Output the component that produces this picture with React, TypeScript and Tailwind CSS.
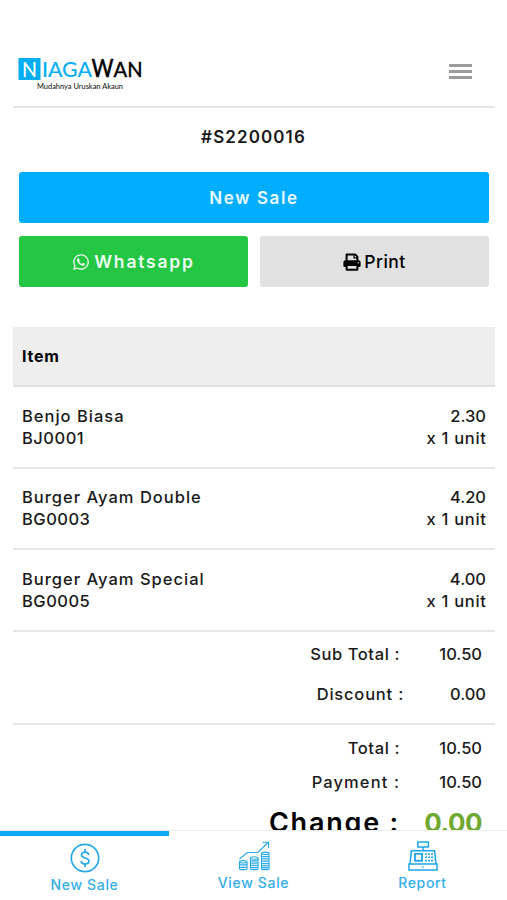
import React from 'react';
import { FaWhatsapp } from 'react-icons/fa';

const items = [
  { name: 'Benjo Biasa', code: 'BJ0001', price: '2.30', qty: 'x 1 unit' },
  { name: 'Burger Ayam Double', code: 'BG0003', price: '4.20', qty: 'x 1 unit' },
  { name: 'Burger Ayam Special', code: 'BG0005', price: '4.00', qty: 'x 1 unit' },
];

const Logo: React.FC = () => (
  <svg width="126" height="36" viewBox="0 0 126 36" role="img" aria-label="Niagawan">
    <rect x="0.5" y="2" width="22" height="22" fill="#00aeef" />
    <g fontFamily="Lato, sans-serif">
      <text x="4" y="20.5" fontSize="22" fill="#fff" textLength="15" lengthAdjust="spacingAndGlyphs">N</text>
      <text x="24" y="21" fontSize="22" fill="#00aeef" textLength="50" lengthAdjust="spacingAndGlyphs">IAGA</text>
      <text x="73.500" y="21" fontSize="25" fill="#000" stroke="#000" strokeWidth="0.4" textLength="22" lengthAdjust="spacingAndGlyphs">W</text>
      <text x="95.500" y="21" fontSize="22" fill="#000" stroke="#000" strokeWidth="0.3" textLength="29" lengthAdjust="spacingAndGlyphs">AN</text>
      <text x="19" y="33" fontSize="7.5" fill="#222" textLength="86" lengthAdjust="spacingAndGlyphs">Mudahnya Uruskan Akaun</text>
    </g>
  </svg>
);

const PrintIcon: React.FC = () => (
  <svg width="18" height="18" viewBox="0 0 18 18" className="mr-[3px]">
    <path d="M3.6 8V1.4h8.6l2.2 2.2V8" fill="none" stroke="#000" strokeWidth="2" strokeLinejoin="round" />
    <path d="M11 1.5v3.3h3.4" fill="none" stroke="#000" strokeWidth="1.2" />
    <path d="M2.4 7.3h13.2a2 2 0 0 1 2 2v3.8c0 .5-.4.9-.9.9H1.3a.9.9 0 0 1-.9-.9V9.3a2 2 0 0 1 2-2z" fill="#000" />
    <rect x="3.6" y="12" width="10.8" height="4.8" rx="0.6" fill="#e1e1e1" stroke="#000" strokeWidth="2" />
    <circle cx="15.3" cy="9.7" r="0.7" fill="#e1e1e1" />
  </svg>
);

const DollarIcon: React.FC = () => (
  <svg width="30" height="30" viewBox="0 0 30 30" fill="none" stroke="#27a9e8" strokeWidth="1.7" strokeLinecap="round">
    <circle cx="15" cy="15" r="13.7" />
    <path d="M18.6 11.4c-.4-1.5-1.8-2.3-3.5-2.3-2.1 0-3.6 1.1-3.6 2.9 0 4.2 7.4 1.8 7.4 6 0 1.9-1.6 3-3.8 3-2 0-3.5-.9-3.9-2.5M15 6.6v2.2M15 21.2v2.2" />
  </svg>
);

const CoinsIcon: React.FC = () => (
  <svg width="32" height="30" viewBox="0 0 32 30" fill="none" stroke="#27a9e8" strokeWidth="1.1">
    <path d="M1.5 18 9.5 11.5H20L30 1.5M24.5 1.3h6v6" />
    <path d="M1.5 21v7c0 1 7.5 1 7.5 0v-7M12.5 17v11c0 1 7.5 1 7.5 0V17M23.5 12.5V28c0 1 7.5 1 7.5 0V12.5" />
    <ellipse cx="5.25" cy="20.8" rx="3.75" ry="1.2" />
    <ellipse cx="16.25" cy="17" rx="3.75" ry="1.2" />
    <ellipse cx="27.25" cy="12.3" rx="3.75" ry="1.2" />
    <path d="M1.5 23.3c0 1 7.5 1 7.5 0M1.5 25.7c0 1 7.5 1 7.5 0M12.5 19.3c0 1 7.5 1 7.5 0M12.5 21.5c0 1 7.5 1 7.5 0M12.5 23.7c0 1 7.5 1 7.5 0M12.5 25.9c0 1 7.5 1 7.5 0M23.5 15c0 1 7.5 1 7.5 0M23.5 17.3c0 1 7.5 1 7.5 0M23.5 19.6c0 1 7.5 1 7.5 0M23.5 21.9c0 1 7.5 1 7.5 0M23.5 24.2c0 1 7.5 1 7.5 0M23.5 26.2c0 1 7.5 1 7.5 0" />
  </svg>
);

const RegisterIcon: React.FC = () => (
  <svg width="30" height="30" viewBox="0 0 30 30" fill="none" stroke="#1fa5e8" strokeWidth="1.5">
    <rect x="9.8" y="1" width="10.6" height="5" />
    <path d="M15 6v4M2 23 3.4 9.8h23.2L28 23" />
    <rect x="1" y="23" width="28" height="6" />
    <rect x="7" y="12.8" width="7" height="7" strokeWidth="1.8" />
    <path d="M17 13h8M17 16.3h8M17 19.6h8" strokeWidth="1.6" strokeDasharray="2 1" />
    <path d="M13.8 26h2.4" strokeWidth="1" />
  </svg>
);

const App: React.FC = () => {
  return (
    <div className="flex h-[900px] w-[507px] flex-col overflow-hidden bg-white font-['Inter',sans-serif] text-[16.5px] font-medium text-[#1a1a1a]">
      <main className="flex min-h-0 flex-1 flex-col overflow-hidden px-[13px] pt-[54px]">
        <header className="flex h-[54px] w-[482px] shrink-0 items-start justify-between border-b-2 border-[#e5e5e5] pl-[5px] pr-[23px]">
          <div className="pt-0.5">
            <Logo />
          </div>
          <div className="mt-2.5 flex w-[23px] flex-col gap-[3px]">
            <span className="h-[3px] bg-[#9c9c9c]" />
            <span className="h-[3px] bg-[#9c9c9c]" />
            <span className="h-[3px] bg-[#9c9c9c]" />
          </div>
        </header>

        <h1 className="mt-[17px] h-6 shrink-0 text-center text-[17px] leading-6 font-semibold tracking-[1.1px]">#S2200016</h1>

        <div className="mt-[23px] grid shrink-0 grid-cols-2 gap-x-3 gap-y-[13px] pl-1.5 pr-[5px]">
          <button className="col-span-2 h-[51px] rounded-[3px] bg-[#00adff] pt-0.5 text-[17px] font-semibold tracking-[1.6px] text-[#eaf9ff]">New Sale</button>
          <button className="flex h-[51px] items-center justify-center rounded-[3px] bg-[#25c643] text-[17.5px] font-semibold tracking-[1.8px] text-[#eafff0]">
            <FaWhatsapp className="mr-1 size-[18px]" />
            <span className="pt-0.5">Whatsapp</span>
          </button>
          <button className="flex h-[51px] items-center justify-center rounded-[3px] bg-[#e1e1e1] text-[17.5px] font-medium tracking-[0.5px] text-black">
            <PrintIcon />
            <span className="pt-px">Print</span>
          </button>
        </div>

        <section className="mt-10 w-[482px] shrink-0">
          <div className="flex h-[60px] items-center border-b-2 border-[#e2e2e2] bg-[#eee] pl-[9px] text-base font-bold tracking-[0.8px] text-black">Item</div>
          {items.map((item) => (
            <div key={item.code} className="flex h-[81.5px] items-center justify-between border-b-2 border-[#e7e7e7] px-[9px] leading-[22px]">
              <div>
                <div className="tracking-[1px]">{item.name}</div>
                <div className="tracking-[0.5px]">{item.code}</div>
              </div>
              <div className="text-right">
                <div>{item.price}</div>
                <div className="-mr-[0.7px] tracking-[0.7px]">{item.qty}</div>
              </div>
            </div>
          ))}
          <div className="h-[93px] border-b-2 border-[#e7e7e7] pt-2.5 leading-6">
            <div className="flex justify-end pr-[13px]">
              <span className="tracking-[0.6px]">Sub Total :</span>
              <span className="w-[82px] text-right">10.50</span>
            </div>
            <div className="mt-4 flex justify-end pr-[9px]">
              <span className="tracking-[0.8px]">Discount :</span>
              <span className="w-[82px] text-right">0.00</span>
            </div>
          </div>
          <div className="pt-[11px] pr-[13px] leading-6">
            <div className="flex justify-end">
              <span className="tracking-[0.6px]">Total :</span>
              <span className="w-[82px] text-right">10.50</span>
            </div>
            <div className="mt-2.5 flex justify-end">
              <span className="tracking-[1.1px]">Payment :</span>
              <span className="w-[82px] text-right">10.50</span>
            </div>
            <div className="mt-[13px] flex justify-end text-[27px] leading-8 text-black">
              <span className="font-semibold tracking-[1.8px]">Change :</span>
              <span className="w-[82px] text-right text-[26px] font-bold tracking-[-0.5px] text-[#70a832]">0.00</span>
            </div>
          </div>
        </section>
      </main>

      <nav className="grid h-[70px] shrink-0 grid-cols-3 border-t border-[#ededed] bg-white text-[14px] leading-[18px] tracking-[0.65px] text-[#35aee9]">
        <div className="flex flex-col items-center border-t-[5px] border-[#0caaf5] pt-[7px]">
          <DollarIcon />
          <span className="mt-[3px]">New Sale</span>
        </div>
        <div className="flex flex-col items-center pt-2.5">
          <CoinsIcon />
          <span className="mt-[3px]">View Sale</span>
        </div>
        <div className="flex flex-col items-center pt-2.5">
          <RegisterIcon />
          <span className="mt-[3px]">Report</span>
        </div>
      </nav>
    </div>
  );
};

export default App;
